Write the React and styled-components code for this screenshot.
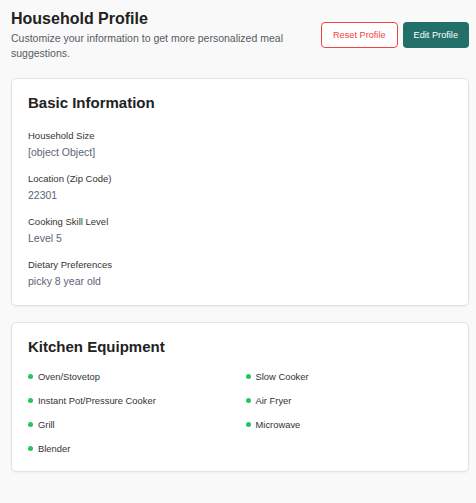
import React from 'react'
import styled, { createGlobalStyle } from 'styled-components'

const GlobalStyle = createGlobalStyle`
	html, body {
		margin: 0;
		padding: 0;
		background: #f9f9f9;
		font-family: "Liberation Sans", Arial, sans-serif;
	}
`

const profile = {
	householdSize: { adults: 2, kids: 1 },
	zip: '22301',
	skill: 'Level 5',
	dietary: 'picky 8 year old',
}

const equipment = [
	'Oven/Stovetop',
	'Slow Cooker',
	'Instant Pot/Pressure Cooker',
	'Air Fryer',
	'Grill',
	'Microwave',
	'Blender',
]

const App = () => {
	const fields = [
		{ label: 'Household Size', value: String(profile.householdSize) },
		{ label: 'Location (Zip Code)', value: profile.zip },
		{ label: 'Cooking Skill Level', value: profile.skill },
		{ label: 'Dietary Preferences', value: profile.dietary },
	]

	return (
		<Page>
			<GlobalStyle />
			<Header>
				<TitleBlock>
					<Title>Household Profile</Title>
					<Subtitle>Customize your information to get more personalized meal suggestions.</Subtitle>
				</TitleBlock>
				<Actions>
					<Button variant="outline">Reset Profile</Button>
					<Button>Edit Profile</Button>
				</Actions>
			</Header>

			<Card>
				<CardTitle>Basic Information</CardTitle>
				<Fields>
					{ fields.map(f => (
						<Field key={ f.label }>
							<Label>{ f.label }</Label>
							<Value>{ f.value }</Value>
						</Field>
					)) }
				</Fields>
			</Card>

			<Card>
				<CardTitle tight>Kitchen Equipment</CardTitle>
				<EquipmentGrid>
					{ equipment.map(item => (
						<Item key={ item }>
							<Dot />
							{ item }
						</Item>
					)) }
				</EquipmentGrid>
			</Card>
		</Page>
	)
}

export default App

const Page = styled.div`
	padding: 10px 7px 30px 11px;
	display: flex;
	flex-direction: column;
	gap: 16px;
`

const Header = styled.div`
	display: flex;
	justify-content: space-between;
	align-items: flex-start;
	margin-bottom: 1px;
`

const TitleBlock = styled.div`
	width: 290px;
`

const Title = styled.h1`
	margin: 0;
	font-size: 16px;
	font-weight: bold;
	color: #222;
	line-height: 18px;
`

const Subtitle = styled.p`
	margin: 3px 0 0;
	font-size: 10.5px;
	line-height: 15px;
	color: #555b63;
`

const Actions = styled.div`
	display: flex;
	gap: 5px;
	margin-top: 12px;
`

const Button = styled.button`
	height: 26px;
	padding: 0 11px;
	border-radius: 4px;
	font-family: inherit;
	font-size: 9.2px;
	cursor: pointer;
	border: ${ p => p.variant === 'outline' ? '1px solid #ef4444' : 'none' };
	background: ${ p => p.variant === 'outline' ? '#fff' : '#236f6a' };
	color: ${ p => p.variant === 'outline' ? '#ef4444' : '#fff' };
`

const Card = styled.div`
	background: #fff;
	border: 1px solid #e2e2e2;
	border-radius: 5px;
	box-shadow: 0 1px 2px rgba(0, 0, 0, 0.05);
	padding: 14px 16px 16px;
`

const CardTitle = styled.h2`
	margin: 0 0 ${ p => p.tight ? '13px' : '16px' };
	font-size: 15px;
	font-weight: bold;
	color: #222;
	line-height: 20px;
`

const Fields = styled.div`
	display: flex;
	flex-direction: column;
	gap: 12px;
`

const Field = styled.div`
	display: flex;
	flex-direction: column;
	gap: 3px;
`

const Label = styled.div`
	font-size: 9.5px;
	line-height: 13px;
	color: #333;
`

const Value = styled.div`
	font-size: 10.5px;
	line-height: 15px;
	color: #5b6478;
`

const EquipmentGrid = styled.div`
	display: grid;
	grid-template-columns: 1fr 1fr;
	column-gap: 11px;
	row-gap: 11px;
`

const Item = styled.div`
	display: flex;
	align-items: center;
	gap: 5px;
	font-size: 9.4px;
	line-height: 13px;
	color: #333;
`

const Dot = styled.span`
	width: 5px;
	height: 5px;
	border-radius: 50%;
	background: #22c55e;
`
